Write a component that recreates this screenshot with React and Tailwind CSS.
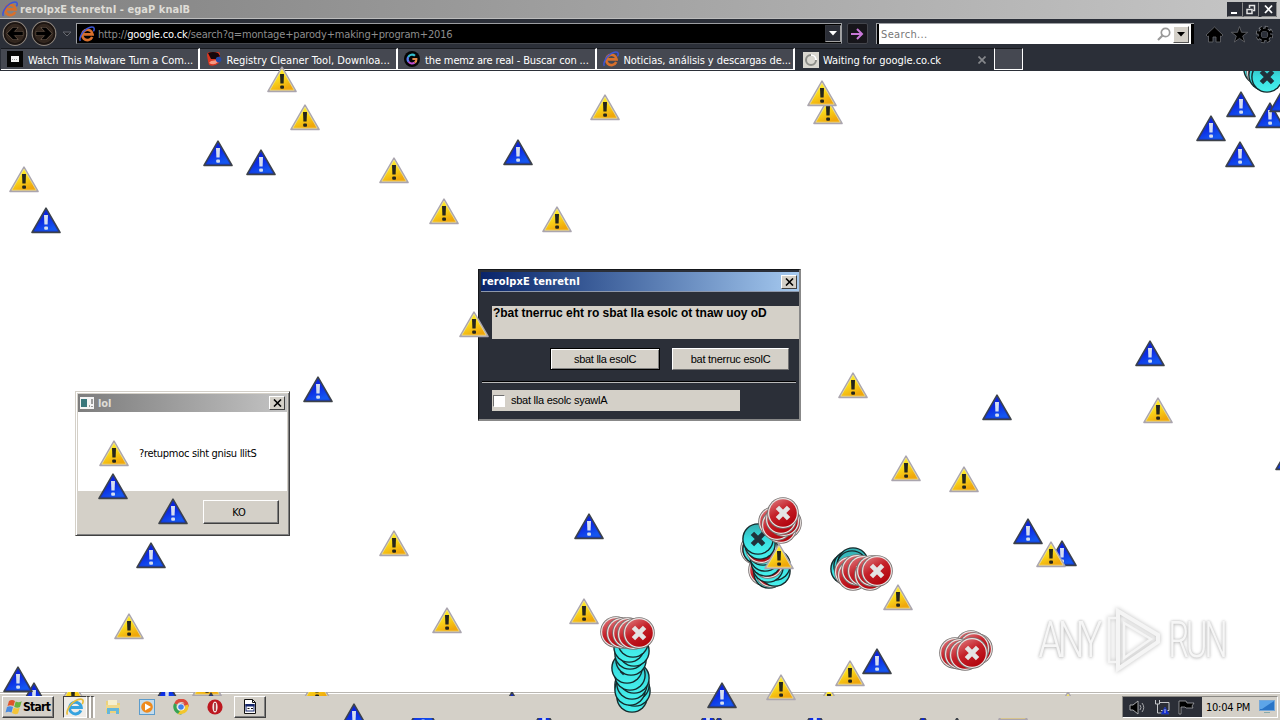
import React from 'react';

const WARNINGS = [
  { x: 282, y: 79 }, { x: 305, y: 117 }, { x: 605, y: 107 }, { x: 828, y: 111 }, { x: 822, y: 93 },
  { x: 394, y: 170 }, { x: 24, y: 179 }, { x: 444, y: 211 }, { x: 557, y: 219 }, { x: 474, y: 324 },
  { x: 114, y: 453 }, { x: 853, y: 385 }, { x: 1158, y: 410 }, { x: 906, y: 468 }, { x: 964, y: 479 },
  { x: 394, y: 543 }, { x: 1051, y: 554 }, { x: 898, y: 597 }, { x: 584, y: 611 }, { x: 447, y: 620 },
  { x: 129, y: 626 }, { x: 850, y: 673 }, { x: 781, y: 687 }, { x: 779, y: 556 },
];

const INVERTED_WARNINGS = [
  { x: 218, y: 153 }, { x: 261, y: 162 }, { x: 518, y: 152 }, { x: 46, y: 220 }, { x: 318, y: 389 },
  { x: 113, y: 486 }, { x: 173, y: 511 }, { x: 151, y: 555 }, { x: 589, y: 526 }, { x: 1150, y: 353 },
  { x: 997, y: 407 }, { x: 1062, y: 553 }, { x: 1028, y: 531 }, { x: 877, y: 661 }, { x: 722, y: 695 },
  { x: 1241, y: 104 }, { x: 1211, y: 128 }, { x: 1240, y: 154 }, { x: 1270, y: 115 }, { x: 1284, y: 99 },
  { x: 1290, y: 457 }, { x: 354, y: 716 }, { x: 18, y: 679 },
];

// t: r = red, c = cyan (inverted), drawn in order
const ERRORS = [
  { t: 'r', x: 1255, y: 60 }, { t: 'c', x: 1259, y: 69 }, { t: 'r', x: 1262, y: 72 }, { t: 'c', x: 1264, y: 75 }, { t: 'c', x: 1267, y: 77 },

  { t: 'r', x: 756, y: 549 }, { t: 'c', x: 758, y: 549 }, { t: 'r', x: 764, y: 570 }, { t: 'c', x: 769, y: 573 },
  { t: 'r', x: 771, y: 572 }, { t: 'c', x: 775, y: 571 }, { t: 'c', x: 775, y: 565 }, { t: 'c', x: 768, y: 567 },
  { t: 'r', x: 768, y: 563 }, { t: 'c', x: 766, y: 561 }, { t: 'c', x: 765, y: 556 }, { t: 'c', x: 763, y: 550 },
  { t: 'r', x: 761, y: 548 }, { t: 'c', x: 760, y: 544 }, { t: 'c', x: 758, y: 539 },
  { t: 'r', x: 786, y: 523 }, { t: 'r', x: 781, y: 528 }, { t: 'r', x: 774, y: 522 }, { t: 'r', x: 777, y: 525 },
  { t: 'r', x: 784, y: 521 }, { t: 'r', x: 781, y: 519 }, { t: 'r', x: 783, y: 513 },

  { t: 'c', x: 846, y: 569 }, { t: 'c', x: 849, y: 566 }, { t: 'c', x: 853, y: 563 }, { t: 'c', x: 852, y: 566 },
  { t: 'r', x: 850, y: 572 }, { t: 'r', x: 853, y: 575 }, { t: 'r', x: 857, y: 570 }, { t: 'r', x: 863, y: 571 },
  { t: 'r', x: 870, y: 575 }, { t: 'r', x: 872, y: 571 }, { t: 'r', x: 877, y: 571 },

  { t: 'r', x: 633, y: 687 }, { t: 'c', x: 630, y: 685 }, { t: 'c', x: 632, y: 697 }, { t: 'c', x: 635, y: 691 },
  { t: 'c', x: 634, y: 685 }, { t: 'c', x: 630, y: 690 }, { t: 'c', x: 632, y: 684 }, { t: 'c', x: 634, y: 678 },
  { t: 'c', x: 630, y: 675 }, { t: 'c', x: 627, y: 668 }, { t: 'c', x: 631, y: 660 }, { t: 'c', x: 630, y: 654 },
  { t: 'c', x: 634, y: 651 }, { t: 'c', x: 629, y: 647 }, { t: 'c', x: 633, y: 642 },
  { t: 'r', x: 616, y: 632 }, { t: 'r', x: 622, y: 633 }, { t: 'r', x: 628, y: 633 }, { t: 'r', x: 633, y: 634 }, { t: 'r', x: 639, y: 633 },

  { t: 'r', x: 977, y: 649 }, { t: 'r', x: 971, y: 646 }, { t: 'r', x: 974, y: 648 }, { t: 'r', x: 955, y: 653 },
  { t: 'r', x: 960, y: 654 }, { t: 'r', x: 965, y: 655 }, { t: 'r', x: 972, y: 653 },
];

// slivers of icons that still show at the edges of the taskbar
const TOP_SLIVERS = [
  { x: 73, top: -12 }, { x: 167, top: -12, blue: true }, { x: 207, top: -22 }, { x: 211, top: 0, blue: true },
  { x: 317, top: -17 }, { x: 512, top: -1, blue: true }, { x: 829, top: -6 }, { x: 1068, top: -1 },
];

const BOTTOM_SLIVERS = [
  { x: 423, top: -18, blue: true }, { x: 544, top: -11, blue: true }, { x: 708, top: -10, blue: true },
  { x: 719, top: -3, blue: true }, { x: 815, top: -11, blue: true }, { x: 923, top: -4, blue: true },
  { x: 957, top: -1, blue: true }, { x: 1013, top: -24 },
];

const Triangle = ({ blue, ...props }) => (
  <svg width="30" height="27" viewBox="0 0 30 27" {...props}>
    <path
      d="M15 1.2 L29 25.5 H1 Z"
      fill={blue ? '#3d4249' : '#aaa5ae'}
      stroke={blue ? '#3d4249' : '#aaa5ae'}
      strokeWidth="1.6"
      strokeLinejoin="round"
    />
    <path d="M15 3 L27.2 24.2 H2.8 Z" fill={blue ? 'url(#tri-blue)' : 'url(#tri-yellow)'} stroke={blue ? '#1733b8' : '#f3e59a'} strokeWidth=".7" />
    <path d="M13 8 h4 l-.4 9.5 h-3.200 z" fill={blue ? '#d5def0' : '#24251c'} />
    <rect x="13.2" y="19.4" width="3.8" height="3.4" rx="1" fill={blue ? '#d5def0' : '#24251c'} />
  </svg>
);

const ErrorDot = ({ t, x, y }) => {
  const red = t === 'r';
  return (
    <g transform={`translate(${x} ${y})`}>
      <circle r="15.8" fill={red ? '#77706f' : '#142a2c'} />
      <circle r="15" fill={red ? '#e9e2e1' : '#172c2f'} />
      <circle r={red ? 13.8 : 14.4} fill={red ? 'url(#dot-red)' : 'url(#dot-cyan)'} />
      <path d="M-5.6 -5.6 L5.6 5.6 M5.6 -5.6 L-5.6 5.6" stroke={red ? '#e4e4e4' : '#20313b'} strokeWidth="4.8" />
    </g>
  );
};

const Defs = () => (
  <svg width="0" height="0" className="absolute">
    <defs>
      <linearGradient id="tri-yellow" x1="0" y1="0" x2=".5" y2="1">
        <stop offset="0" stopColor="#fff52c" />
        <stop offset=".5" stopColor="#fbdc1c" />
        <stop offset="1" stopColor="#f0a80c" />
      </linearGradient>
      <linearGradient id="tri-blue" x1="0" y1="0" x2=".5" y2="1">
        <stop offset="0" stopColor="#0818e0" />
        <stop offset=".55" stopColor="#0c2ce4" />
        <stop offset="1" stopColor="#1456f0" />
      </linearGradient>
      <linearGradient id="dot-red" x1="0" y1="0" x2=".6" y2="1">
        <stop offset="0" stopColor="#e07f83" />
        <stop offset=".5" stopColor="#c5222a" />
        <stop offset="1" stopColor="#b3060f" />
      </linearGradient>
      <linearGradient id="dot-cyan" x1="0" y1="0" x2="0" y2="1">
        <stop offset="0" stopColor="#35aeb1" />
        <stop offset=".5" stopColor="#38dde0" />
        <stop offset="1" stopColor="#47f0ec" />
      </linearGradient>
    </defs>
  </svg>
);

const IeLogo = ({ size = 16, color = '#d8702c', ring = '#3c55d8', className = '' }) => (
  <svg width={size} height={size} viewBox="0 0 16 16" fill="none" className={className}>
    <path d="M13.2 11 A5.200 5.200 0 1 1 13.600 8.400 H4" stroke={color} strokeWidth="2.6" />
    <path d="M1.3 14.8 C-.3 12 3.2 5.6 8 2.7 C11.6 .4 15 .3 15.2 2.6 C15.3 3.6 14.9 4.6 14.4 5.4" stroke={ring} strokeWidth="1.5" />
  </svg>
);

const Logo = ({ name }) => {
  switch (name) {
    case 'dark':
      return (
        <svg width="16" height="16" className="shrink-0">
          <rect width="16" height="16" fill="#050505" />
          <rect x="4" y="5" width="8" height="6" fill="#f2f2f2" />
          <path d="M5 8.5h6" stroke="#999" strokeDasharray="1 1" />
        </svg>
      );
    case 'registry':
      return (
        <svg width="16" height="16" className="shrink-0">
          <path d="M1 4q0-3 3-3h8q2 0 2 3l-1 8q-5 4-10 2-1-3-2-10z" fill="#d93620" />
          <path d="M2 2q5-2 10 0l2 3-3 3H5z" fill="#16070b" />
          <path d="M3 12q5 3 9-1l-1-2-6 1z" fill="#f49a84" />
          <circle cx="12.6" cy="8.6" r="2.800" fill="#2349a8" />
        </svg>
      );
    case 'google':
      return (
        <svg width="16" height="16" fill="none" className="shrink-0">
          <circle cx="8" cy="8" r="8" fill="#050505" />
          <path d="M4.2 6 A4.4 4.4 0 0 1 11 4.8" stroke="#35bfd0" strokeWidth="2.2" />
          <path d="M4.2 6 A4.4 4.4 0 0 0 4.7 10.9" stroke="#5a7df0" strokeWidth="2.2" />
          <path d="M4.7 10.9 A4.4 4.4 0 0 0 10.6 11.6" stroke="#c34fd0" strokeWidth="2.2" />
          <path d="M10.6 11.6 Q12.6 10.4 12.4 8 H8.4" stroke="#e28a4e" strokeWidth="2.1" />
        </svg>
      );
    case 'loading':
      return (
        <svg width="16" height="16" fill="none" className="shrink-0">
          <rect width="16" height="16" fill="#d9d7d0" />
          <circle cx="8" cy="8" r="5" stroke="#8c8d88" strokeWidth="2" />
          <path d="M8 3 A5 5 0 0 1 13 8" stroke="#fff" strokeWidth="2.2" />
        </svg>
      );
    default:
      return <IeLogo className="shrink-0" />;
  }
};

const TABS = [
  { label: 'Watch This Malware Turn a Com...', logo: 'dark', track: 'tracking-[-0.06px]' },
  { label: 'Registry Cleaner Tool, Downloa...', logo: 'registry', track: 'tracking-[0.02px]' },
  { label: 'the memz are real - Buscar con ...', logo: 'google', track: 'tracking-[-0.13px]' },
  { label: 'Noticias, análisis y descargas de...', logo: 'ie', track: 'tracking-[-0.08px]' },
];

const TitleBar = () => (
  <div className="flex h-[18px] items-center bg-linear-to-r from-[#818181] to-[#c6c6c6] pl-0.5 pr-[3px]">
    <IeLogo />
    <span className="ml-0.5 flex-1 text-[11px] font-bold tracking-[0.03px] text-[#dedcd6]">rerolpxE tenretnI - egaP knalB</span>
    <div className="flex h-[15px] bg-[#2b2e37] text-white">
      <svg width="50" height="15" fill="none" stroke="#e4e4e4">
        <path d="M.5 14.5h15v-14M16.5 14.5h15v-14M34.5 14.5h15v-14" stroke="#8b8b8b" />
        <path d="M4 11h6" stroke="#fff" strokeWidth="2" />
        <path d="M22.5 6V3.5h5v5H26M20 7.5h5v4h-5z" strokeWidth="1.5" />
        <path d="M38 3.5l7 7.5M45 3.5l-7 7.5" stroke="#fff" strokeWidth="1.8" />
      </svg>
    </div>
  </div>
);

const NavButton = ({ flip }) => (
  <svg width="26" height="27" viewBox="0 0 26 27" fill="none">
    <circle cx="13" cy="13.5" r="11.8" fill="#33271f" stroke="#8a827b" strokeWidth="1.2" />
    <circle cx="13" cy="13.5" r="10.4" stroke="#1b1411" strokeWidth="1.5" />
    <g transform={flip ? 'matrix(-1 0 0 1 26 0)' : undefined}>
      <path d="M20.500 12v3h-9l3.500 4h-4l-5.500-5.500L11 8h4l-3.500 4z" stroke="#6b5a4c" strokeWidth="1.600" />
      <path d="M20.500 12v3h-9l3.500 4h-4l-5.500-5.500L11 8h4l-3.500 4z" fill="#000" stroke="#000" strokeWidth=".6" />
    </g>
  </svg>
);

const Toolbar = () => (
  <div className="flex h-[29px] items-center">
    <div className="flex w-[76px] items-center gap-[3px] pl-0.5">
      <NavButton />
      <NavButton flip />
      <svg width="10" height="6" className="ml-0.5"><path d="M1 1h8l-4 4z" fill="#24262c" stroke="#666970" /></svg>
    </div>
    <div className="flex h-[21px] w-[766px] items-center border border-[#9c9ea2] border-b-[#44474d] bg-black pl-0.5">
      <IeLogo />
      <span className="ml-[3px] flex-1 pt-px text-[11px] tracking-[-0.16px] text-[#8d8d8d]">
        http://<span className="text-white">google.co.ck</span>/search?q=montage+parody+making+program+2016
      </span>
      <div className="flex h-[17px] w-4 items-center justify-center border border-[#34363d] border-b-[#a2a2a2] border-r-[#a2a2a2] bg-[#2b2e37]">
        <svg width="8" height="5"><path d="M0 0h8L4 4.5z" fill="#fff" /></svg>
      </div>
    </div>
    <div className="ml-[5px] flex h-[21px] w-[21px] items-center justify-center rounded-xs border border-[#43454c] bg-[#16151a]">
      <svg width="13" height="12" fill="none" stroke="#c877d8" strokeWidth="2"><path d="M0 6h11M6 1l5 5-5 5" /></svg>
    </div>
    <div className="ml-2 flex h-[21px] w-[318px] border-l border-t border-[#9c9ea2] bg-black pl-0.5 pr-[3px]">
      <div className="flex flex-1 items-center bg-white pl-0.5 pr-0.5">
        <span className="flex-1 text-[11px] tracking-[0.35px] text-[#777]">Search...</span>
        <svg width="14" height="14" fill="none" stroke="#999">
          <circle cx="8.5" cy="5.5" r="4.2" strokeWidth="1.7" />
          <path d="M5.5 8.5L1 13" strokeWidth="2.2" />
        </svg>
        <div className="ml-0.5 flex h-[17px] w-4 items-center justify-center border border-white border-b-[#555] border-r-[#555] bg-[#d4d0c8]">
          <svg width="8" height="5"><path d="M0 0h8L4 4.5z" fill="#000" /></svg>
        </div>
      </div>
    </div>
    <div className="ml-3 flex items-center gap-2 pt-0.5">
      <svg width="17" height="17" className="overflow-visible" stroke="#686a6f" strokeWidth=".8">
        <path d="M8.5 1L17 9l-1.6 1.5L14.5 10v6H10v-5H7v5H2.500v-6l-1 .5L0 9z" fill="#000" />
      </svg>
      <svg width="17" height="17" className="overflow-visible" stroke="#686a6f" strokeWidth=".8">
        <path d="M8.500 .5l2 5.800h6.200l-5 3.700 1.900 6-5.100-3.600L3.400 16l1.900-6-5-3.700h6.200z" fill="#000" />
      </svg>
      <svg width="17" height="17" className="overflow-visible" fill="none">
        <circle cx="8.500" cy="8.500" r="6.700" stroke="#7b7d82" strokeWidth="4" strokeDasharray="3 2.260" />
        <circle cx="8.500" cy="8.500" r="5" stroke="#7b7d82" strokeWidth="3.600" />
        <circle cx="8.500" cy="8.500" r="6.500" stroke="#000" strokeWidth="3" strokeDasharray="2.400 2.705" strokeDashoffset="-.3" />
        <circle cx="8.500" cy="8.500" r="4.800" stroke="#000" strokeWidth="2.400" />
      </svg>
    </div>
  </div>
);

const TabBar = () => (
  <div className="flex h-[23px] pl-px text-[11px] text-white">
    {TABS.map((tab) => (
      <div key={tab.label} className="flex h-[22px] w-[198.500px] items-center border-b border-r-2 border-white border-t border-t-[#17191e] bg-[#454851] pl-1.5">
        <Logo name={tab.logo} />
        <span className={`ml-[5px] whitespace-nowrap pt-0.5 ${tab.track}`}>{tab.label}</span>
      </div>
    ))}
    <div className="flex w-[199px] items-center border-t border-[#17191e] pl-2">
      <Logo name="loading" />
      <span className="ml-1 flex-1 tracking-[-0.05px]">Waiting for google.co.ck</span>
      <svg width="8" height="8" className="mr-2" stroke="#85878b" strokeWidth="1.700"><path d="M.5 .5l7 7M7.500 .5l-7 7" /></svg>
    </div>
    <div className="h-[22px] w-[29px] border border-white border-t-[#17191e] bg-[#454851]" />
  </div>
);

const CloseBox = () => (
  <div className="flex h-[14px] w-4 items-center justify-center border border-white border-b-[#404040] border-r-[#404040] bg-[#d4d0c8]">
    <svg width="9" height="8" stroke="#000" strokeWidth="1.600"><path d="M1 .5l7 7M8 .5l-7 7" /></svg>
  </div>
);

const IeDialog = () => (
  <div className="absolute left-[478px] top-[269px] flex h-[152px] w-[323px] flex-col border border-b-2 border-r-2 border-[#15171b] border-b-[#888] border-r-[#888] bg-[#2b2f38] font-['Liberation_Sans',sans-serif] text-[11px] text-black">
    <div className="ml-0.5 mt-0.5 flex h-5 items-center justify-between border-b border-[#8e98ab] bg-linear-to-r from-[#0a246a] to-[#a6caf0] pl-px pr-0.5">
      <span className="font-['DejaVu_Sans_Condensed','DejaVu_Sans',sans-serif] font-bold tracking-[0.12px] text-white [font-stretch:condensed]">rerolpxE tenretnI</span>
      <CloseBox />
    </div>
    <div className="ml-[13px] mt-3.5 h-[33px] shrink-0 bg-[#d4d0c8] pl-px pt-px text-[12px] font-bold leading-3">
      <span className="tracking-[-0.02px]">?bat tnerruc eht ro sbat lla esolc ot tnaw uoy oD</span>
    </div>
    <div className="mt-[9px] flex justify-end gap-3 pr-2.5">
      <button className="h-[22px] w-[110px] border border-black bg-[#d4d0c8] tracking-[-0.28px] shadow-[inset_1px_1px_#fff,inset_-1px_-1px_#808080]">sbat lla esolC</button>
      <button className="h-[22px] w-[117px] border border-white border-b-[#707070] border-r-[#707070] bg-[#d4d0c8] tracking-[-0.24px]">bat tnerruc esolC</button>
    </div>
    <div className="mx-[3px] mt-[11px] h-0.5 shrink-0 border-t border-black bg-[#b9b9b9]" />
    <div className="ml-[13px] mt-[7px] flex h-[21px] w-[248px] items-center bg-[#d4d0c8] pl-px">
      <span className="h-3 w-3 border border-[#707070] border-b-white border-r-white bg-white" />
      <span className="ml-1.5 tracking-[-0.25px]">sbat lla esolc syawlA</span>
    </div>
  </div>
);

const LolDialog = () => (
  <div className="absolute left-[75px] top-[391px] flex h-[145px] w-[215px] flex-col border border-[#d4d0c8] border-b-[#404040] border-r-[#404040] bg-[#d4d0c8] p-px text-[11px] text-black shadow-[inset_1px_1px_#fff,inset_-1px_-1px_#808080]">
    <div className="mx-px mt-px flex h-[18px] items-center bg-linear-to-r from-[#7d7d7d] to-[#c4c4c4] pl-0.5 pr-0.5">
      <svg width="14" height="12">
        <rect width="14" height="12" fill="#f4f4f4" />
        <rect x="1" y="2" width="6" height="8" fill="#39777b" />
        <path d="M9 9h1M12 2v5M12 9v1" stroke="#444" />
      </svg>
      <span className="ml-1 flex-1 font-bold tracking-[-0.1px] text-[#dedcd6]">lol</span>
      <CloseBox />
    </div>
    <div className="mx-px flex h-[79px] items-center bg-white pl-[61px] pt-1">
      <span className="tracking-[-0.3px]">?retupmoc siht gnisu llitS</span>
    </div>
    <div className="flex justify-end pr-[9px] pt-[9px]">
      <button className="h-6 w-[76px] border border-white border-b-[#404040] border-r-[#404040] bg-[#d4d0c8] pr-1 shadow-[inset_-1px_-1px_#808080]">KO</button>
    </div>
  </div>
);

const Watermark = () => (
  <div className="absolute left-[1038px] top-[606px] flex h-[68px] w-[198px] items-center justify-between font-['Open_Sans',sans-serif] text-[50px] font-light leading-none text-[#f6f6f6] [text-shadow:0_0_3px_#bbb,0_1px_4px_#ccc]">
    <span className="w-[60px] origin-left scale-x-[.9] whitespace-nowrap font-['Roboto',sans-serif] tracking-[-6px]">ANY</span>
    <svg width="58" height="66" viewBox="0 0 58 66" fill="none" stroke="#f5f5f5" strokeWidth="4" className="drop-shadow-[0_0_2px_#bbb]">
      <path d="M14 4L54 28v7L14 62z" />
      <path d="M14 11h-9v44h9M20 16v35l27-19z" strokeWidth="2.500" />
    </svg>
    <span className="w-[68px] origin-left scale-x-[.78] whitespace-nowrap font-['Roboto',sans-serif] tracking-[-5px]">RUN</span>
  </div>
);

const StartFlag = () => (
  <svg width="17" height="16" viewBox="0 0 17 16">
    <path d="M4 2q3-2 6 0L8.500 7q-3-1.500-6 0z" fill="#e0542a" />
    <path d="M10.700 2.500q3 1.500 6-.2L15 8q-3 1.500-5.800-.3z" fill="#69b23e" />
    <path d="M2 8q3-1.500 6 0l-1.500 5.500q-3-1.700-6 0z" fill="#4a8be0" />
    <path d="M8.700 8.700q3 1.500 6 .1L13 14.500q-3 1.500-6-.5z" fill="#f4c437" />
  </svg>
);

const Slivers = ({ items, className }) => (
  <div className={`absolute left-0 w-full overflow-hidden ${className}`}>
    {items.map((s) => (
      <Triangle key={s.x} blue={s.blue} className="absolute" style={{ left: s.x - 15, top: s.top }} />
    ))}
  </div>
);

const Taskbar = () => (
  <div className="relative flex h-7 items-start border-t border-[#bab7b2] bg-[#d4d0c8] pl-0.5 pr-0.5 pt-[3px] text-[11px] text-black shadow-[inset_0_1px_#fff]">
    <Slivers items={TOP_SLIVERS} className="-top-px h-1" />
    <Slivers items={BOTTOM_SLIVERS} className="bottom-0 h-0.5" />
    <div className="flex h-[22px] w-[52px] items-center border border-white border-b-[#404040] border-r-[#404040] pl-0.5 shadow-[inset_-1px_-1px_#808080]">
      <StartFlag />
      <span className="ml-px text-[12px] font-bold tracking-[-0.7px]">Start</span>
    </div>
    <div className="ml-[9px] flex h-[22px] w-6 items-center justify-center border border-[#404040] border-b-white border-r-white bg-[#efede9]">
      <IeLogo size={18} color="#36a3df" ring="#e8bd3a" />
    </div>
    <div className="h-[22px] w-1 border-r-2 border-t border-white border-t-[#404040] bg-[#a9a59e]" />
    <div className="h-[22px] w-1 border-r-2 border-t border-white border-t-[#404040] bg-[#a9a59e]" />
    <div className="ml-2.5 flex h-[22px] items-center gap-[18px]">
      <svg width="16" height="16">
        <path d="M1 2h5l1 2h8v10H1z" fill="#ecd27b" />
        <path d="M3 1h9v6H3z" fill="#f6efce" />
        <path d="M1 6h14v4H1z" fill="#f0d98c" />
        <path d="M2 15V9h12v6h-3v-3H5v3z" fill="#65b7db" />
      </svg>
      <svg width="16" height="16">
        <rect x=".5" y=".5" width="15" height="15" fill="#c4dced" stroke="#5c9ccc" />
        <circle cx="8" cy="8" r="5.800" fill="#ef8a1d" />
        <path d="M6 4.500l6 3.500-6 3.500z" fill="#fff" />
      </svg>
      <svg width="16" height="16" fill="none">
        <path d="M2.600 5A6 6 0 0 1 14 6H8" stroke="#dc4b3d" strokeWidth="3.200" />
        <path d="M2.600 5A6 6 0 0 0 7.500 13.800l2.600-4" stroke="#37a352" strokeWidth="3.200" />
        <path d="M13.600 6A6 6 0 0 1 7.800 13.600l2.800-4" stroke="#f2c62c" strokeWidth="3.200" />
        <circle cx="8" cy="8" r="3.600" fill="#fff" />
        <circle cx="8" cy="8" r="2.800" fill="#4183ea" />
      </svg>
      <svg width="16" height="16">
        <circle cx="8" cy="8" r="7.600" fill="#bd1820" />
        <ellipse cx="8" cy="8" rx="2.600" ry="5.600" fill="#f2e6e2" />
        <path d="M8 4v8" stroke="#981018" strokeWidth="1.500" />
      </svg>
    </div>
    <div className="ml-[11px] flex h-[22px] w-8 items-center justify-center border border-white border-b-[#404040] border-r-[#404040] shadow-[inset_-1px_-1px_#808080]">
      <svg width="14" height="16">
        <path d="M1.500 .5h8l3 3v11h-11z" fill="#fff" stroke="#111" />
        <path d="M9.500 .5v3h3" fill="none" stroke="#111" />
        <rect x="3" y="5.500" width="8" height="6.500" fill="#fff" stroke="#14256a" />
        <rect x="2.500" y="5" width="9" height="2.500" fill="#14256a" />
        <path d="M4.500 9.500h2M8 9.500h2" stroke="#111" />
      </svg>
    </div>
    <div className="ml-auto flex h-[22px] w-[156px] items-center border border-[#8b8984] border-b-white border-r-white">
      <div className="flex h-full w-[79px] items-center gap-2 bg-[#2b2e37] pl-1.5">
        <svg width="17" height="15" fill="none" stroke="#a7a8ab">
          <path d="M1 5h3l5-4v13l-5-4H1z" fill="#000" />
          <path d="M11 5q2 2.500 0 5M13 3q3.500 4.500 0 9" />
        </svg>
        <svg width="16" height="15" fill="none" stroke="#c4c6c9">
          <path d="M1.500 0v4h4V0M3.500 4v9H8M6 2.500h9v8H7" />
          <path d="M7 14l4-7 4 7z" fill="#0b25df" stroke="#263da0" />
          <path d="M11 9v4" />
        </svg>
        <svg width="17" height="15" fill="#000" stroke="#a5a6a9" strokeWidth=".8"><path d="M1 14V1h7l1 2h7l-2 3 1 2H8L7 7H3v7z" /></svg>
      </div>
      <span className="ml-1 tracking-[-0.25px]">10:04 PM</span>
      <svg width="17" height="14" className="ml-auto mr-px">
        <rect x=".5" y=".5" width="15" height="10" fill="#2a75c7" stroke="#76a8d8" />
        <path d="M1 1h14L3 9H1z" fill="#5da5e8" />
        <path d="M5 12.500h6" stroke="#8aa" />
      </svg>
    </div>
  </div>
);

const App = () => {
  return (
    <div className="relative flex h-[720px] w-[1280px] flex-col overflow-hidden bg-white font-['DejaVu_Sans_Condensed','DejaVu_Sans',sans-serif] leading-none [font-stretch:condensed]">
      <Defs />
      <TitleBar />
      <div className="z-10 h-[53px] border-t border-[#bdbdbd] bg-[#2b2f38]">
        <Toolbar />
        <TabBar />
      </div>
      <main className="flex-1" />
      <Taskbar />

      <LolDialog />
      <IeDialog />
      <Watermark />

      {/* icon trails left over the desktop */}
      <div className="absolute left-0 top-0 h-[696px] w-full overflow-hidden">
        <Triangle blue className="absolute" style={{ left: 19, top: 682 }} />
      </div>
      <svg width="1280" height="720" className="pointer-events-none absolute left-0 top-0">
        {ERRORS.map((e, i) => (
          <ErrorDot key={i} {...e} />
        ))}
      </svg>
      {INVERTED_WARNINGS.map((p) => (
        <Triangle key={`${p.x}-${p.y}`} blue className="absolute" style={{ left: p.x - 15, top: p.y - 13 }} />
      ))}
      {WARNINGS.map((p) => (
        <Triangle
          key={`${p.x}-${p.y}`}
          className={p.y < 80 ? 'absolute z-20' : 'absolute'}
          style={{ left: p.x - 15, top: p.y - 13 }}
        />
      ))}
    </div>
  );
};

export default App;
